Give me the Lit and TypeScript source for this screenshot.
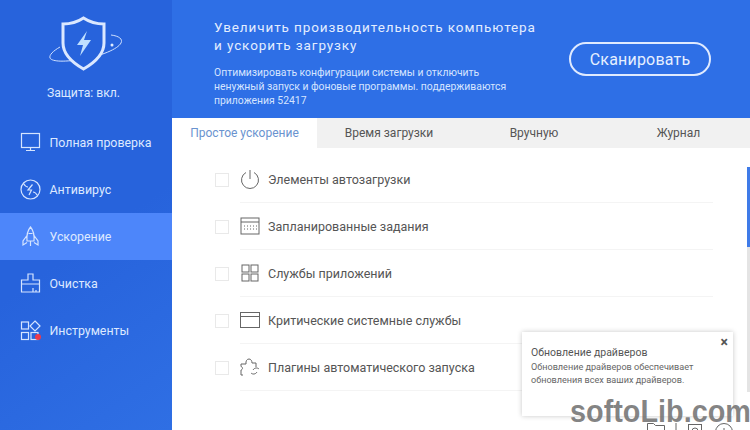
import { LitElement, html, css, svg } from "lit";
import { customElement } from "lit/decorators.js";

const navIcons: Record<string, unknown> = {
  monitor: svg`<rect x="1.5" y="1.5" width="18" height="14" fill="none"/><path d="M10.5 15.5v3M6 18.5h9" fill="none"/>`,
  virus: svg`<circle cx="10.5" cy="10.5" r="9.5" fill="none"/><path d="M12.5 5.5 L8 11h3.5L9 16M3.5 4.5c1.5 2.5 3 3.5 4.500 3.500M17.5 16.500c-1.500-2.500-3-3.500-4.500-3.500" fill="none"/>`,
  rocket: svg`<path d="M10.5 1C7.500 4.500 6.500 9 7 15h7c.5-6-.5-10.500-3.500-14ZM7 9.500 3 15v4l4-2.500M14 9.500l4 5.500v4l-4-2.500M10.500 15v5M8.500 7.500h4" fill="none"/>`,
  brush: svg`<path d="M8 1h5v6h6.500v12h-18V7H8ZM1.500 11h18M13 19v-4M16 19v-2" fill="none"/>`,
};

@customElement("app-root")
export class AppRoot extends LitElement {
  static styles = css`
    :host { display: block; width: 750px; height: 430px; overflow: hidden; font-family: Roboto, "Liberation Sans", sans-serif; position: relative; background: #fff; }
    .app { display: flex; height: 430px; }
    .side { width: 172px; flex: none; background: linear-gradient(145deg, #2763dc 0%, #2763dc 55%, #2f6fe4 100%); color: #e6efff; display: flex; flex-direction: column; }
    .logo { height: 119px; box-sizing: border-box; display: flex; flex-direction: column; align-items: center; padding-top: 16px; }
    .logo svg { display: block; margin-left: 2px; }
    .status { font-size: 12.2px; line-height: 16px; margin-top: 13px; margin-left: -5px; color: #dbe8ff; }
    .nav { display: flex; flex-direction: column; }
    .nav-item { height: 47px; display: flex; align-items: center; padding-left: 20px; gap: 8.500px; font-size: 12.4px; color: #dde9ff; }
    .nav-item.active { background: #4d86fa; }
    .nav-item svg { flex: none; stroke: #d5e4ff; stroke-width: 1.2; }
    .tools { position: relative; flex: none; }
    .dot { position: absolute; width: 6px; height: 6px; border-radius: 50%; background: #ee3b4b; right: 0; bottom: 1px; }
    .main { flex: 1; display: flex; flex-direction: column; min-width: 0; }
    .banner { height: 118px; flex: none; box-sizing: border-box; background: #2e6fe6; color: #fff; display: flex; padding: 18px 39px 0 42px; }
    .banner-text { width: 320px; }
    .title { font-size: 13.5px; line-height: 18px; letter-spacing: 0.9px; color: #e3edff; white-space: nowrap; }
    .desc { font-size: 10.4px; line-height: 14px; color: #d5e4ff; margin-top: 12px; }
    .scan { margin: 24px 0 0 35px; width: 142px; height: 34px; box-sizing: border-box; border: 2px solid #dfeaff; border-radius: 17px; color: #e6efff; font-size: 16px; display: flex; align-items: center; justify-content: center; letter-spacing: 0.2px; }
    .tabs { height: 30px; flex: none; display: flex; background: #f1f1f1; font-size: 12px; color: #555; }
    .tab { display: flex; align-items: center; justify-content: center; flex: none; }
    .tab.active { background: #fff; color: #6a93cf; width: 145px; }
    .t2 { width: 144px; } .t3 { width: 146px; } .t4 { width: 143px; }
    .list { flex: 1; padding: 8px 37px 0 43px; position: relative; }
    .row { height: 47px; display: flex; align-items: center; position: relative; }
    .check { width: 12px; height: 12px; border: 1px solid #e9e9e9; flex: none; margin-right: 11px; }
    .row-body { flex: 1; display: flex; align-items: center; height: 46px; border-bottom: 1px solid #f4f4f4; font-size: 12.5px; color: #555; gap: 8px; }
    .row-body svg { flex: none; stroke: #666; stroke-width: 1; fill: none; }
    .scroll { position: absolute; right: 0; top: 167px; width: 3px; height: 225px; background: #e4e4e4; }
    .thumb { height: 80px; background: #3f7be8; }
    .toast { position: absolute; left: 522px; top: 332px; width: 211px; height: 84px; box-sizing: border-box; padding: 14px 9px 0; background: #fff; box-shadow: 0 0 5px rgba(0,0,0,.22); color: #666; font-size: 9.1px; line-height: 13px; z-index: 2; }
    .toast h4 { margin: 0 0 2px; font-size: 10.5px; line-height: 13px; font-weight: 400; color: #555; }
    .close { position: absolute; right: 5px; top: 2px; font-size: 14px; line-height: 16px; color: #555; font-weight: 700; }
    .foot { position: absolute; left: 647px; top: 423px; display: flex; gap: 10px; z-index: 3; }
    .foot svg { stroke: #666; fill: none; stroke-width: 1; display: block; }
    .mark { position: absolute; left: 570px; top: 394px; font: 700 31px "Liberation Sans", sans-serif; color: rgba(110, 110, 110, .85); transform: scaleX(.93); transform-origin: left top; line-height: 36px; z-index: 4; white-space: nowrap; }
  `;

  nav(icon: unknown, label: string, active = false) {
    return html`<div class="nav-item ${active ? "active" : ""}"><svg width="21" height="21" viewBox="0 0 21 21">${icon}</svg><span>${label}</span></div>`;
  }

  row(icon: unknown, label: string) {
    return html`<div class="row"><div class="check"></div><div class="row-body"><svg width="20" height="20" viewBox="0 0 20 20">${icon}</svg><span>${label}</span></div></div>`;
  }

  render() {
    return html`
      <div class="app">
        <aside class="side">
          <div class="logo">
            <svg width="76" height="56" viewBox="0 0 76 56" fill="none">
              <path d="M62 19c8 1 12 4 10 8-3 6-20 13-38 16C17 46 3 46 1 42c-1-3 3-7 10-11" stroke="#cfe0ff" stroke-width="1"/>
              <circle cx="63" cy="29" r="1.5" fill="#e0ecff"/>
              <path d="M34.5 2 C42 7 48 8 55 8 V27 C55 39 45 47 34.5 53 C24 47 14 39 14 27 V8 C21 8 27 7 34.5 2Z" fill="#2763dc" stroke="#dbe8ff" stroke-width="3"/>
              <path d="M38 15 L28 29h6l-3 11 11-16h-7z" fill="#bfe0ff"/>
            </svg>
            <div class="status">Защита: вкл.</div>
          </div>
          <div class="nav">
            ${this.nav(navIcons.monitor, "Полная проверка")}
            ${this.nav(navIcons.virus, "Антивирус")}
            ${this.nav(navIcons.rocket, "Ускорение", true)}
            ${this.nav(navIcons.brush, "Очистка")}
            <div class="nav-item">
              <span class="tools"><svg width="21" height="21" viewBox="0 0 21 21" style="display:block"><rect x="1.5" y="2" width="7" height="7" fill="none"/><path d="M15 1l5 5-5 5-5-5z" fill="none"/><rect x="1.5" y="12.5" width="7" height="7" fill="none"/><rect x="11" y="12.5" width="7" height="7" fill="none"/></svg><span class="dot"></span></span>
              <span>Инструменты</span>
            </div>
          </div>
        </aside>
        <div class="main">
          <div class="banner">
            <div class="banner-text">
              <div class="title">Увеличить производительность компьютера<br />и ускорить загрузку</div>
              <div class="desc">Оптимизировать конфигурации системы и отключить<br />ненужный запуск и фоновые программы. поддерживаются<br />приложения 52417</div>
            </div>
            <div class="scan">Сканировать</div>
          </div>
          <div class="tabs">
            <div class="tab active">Простое ускорение</div>
            <div class="tab t2">Время загрузки</div>
            <div class="tab t3">Вручную</div>
            <div class="tab t4">Журнал</div>
          </div>
          <div class="list">
            ${this.row(svg`<path d="M10 1v9M6 3.5a8.5 8.5 0 1 0 8 0"/>`, "Элементы автозагрузки")}
            ${this.row(svg`<rect x="1" y="2" width="18" height="16"/><path d="M1 6h18M4 10h1M7 10h1M10 10h1M13 10h1M16 10h1M4 13h1M7 13h1M10 13h1M13 13h1M16 13h1"/>`, "Запланированные задания")}
            ${this.row(svg`<rect x="2" y="2" width="7" height="7"/><rect x="11" y="2" width="7" height="7"/><rect x="2" y="11" width="7" height="7"/><rect x="11" y="11" width="7" height="7"/>`, "Службы приложений")}
            ${this.row(svg`<rect x="0.5" y="2.5" width="19" height="15"/><path d="M0.5 6.5h19"/>`, "Критические системные службы")}
            ${this.row(svg`<path d="M3 18H1v-5c2-.5 2-3 0-3.5V7h5c-.5-3 1-5 3-5s3 2 3 4h4v4M11 16c1.5 1.5 4.5 1.5 6-1M19 12c-1.5-1.5-4.5-1.5-6 1"/>`, "Плагины автоматического запуска")}
          </div>
        </div>
      </div>
      <div class="scroll"><div class="thumb"></div></div>
      <div class="toast">
        <span class="close">×</span>
        <h4>Обновление драйверов</h4>
        Обновление драйверов обеспечивает<br />обновления всех ваших драйверов.
      </div>
      <div class="foot">
        <svg width="18" height="12" viewBox="0 0 18 12"><path d="M.5 12V.5h6l2 2h9V12"/></svg>
        <svg width="2" height="12" viewBox="0 0 2 12"><path d="M1 0v12"/></svg>
        <svg width="16" height="12" viewBox="0 0 16 12"><rect x="1.5" y="1.5" width="13" height="13"/><circle cx="8" cy="8" r="3"/></svg>
        <svg width="18" height="12" viewBox="0 0 18 12" style="margin-left:2px"><circle cx="9" cy="9" r="8.5"/><path d="M9 5v4"/></svg>
      </div>
      <div class="mark">softoLib.com</div>
    `;
  }
}
